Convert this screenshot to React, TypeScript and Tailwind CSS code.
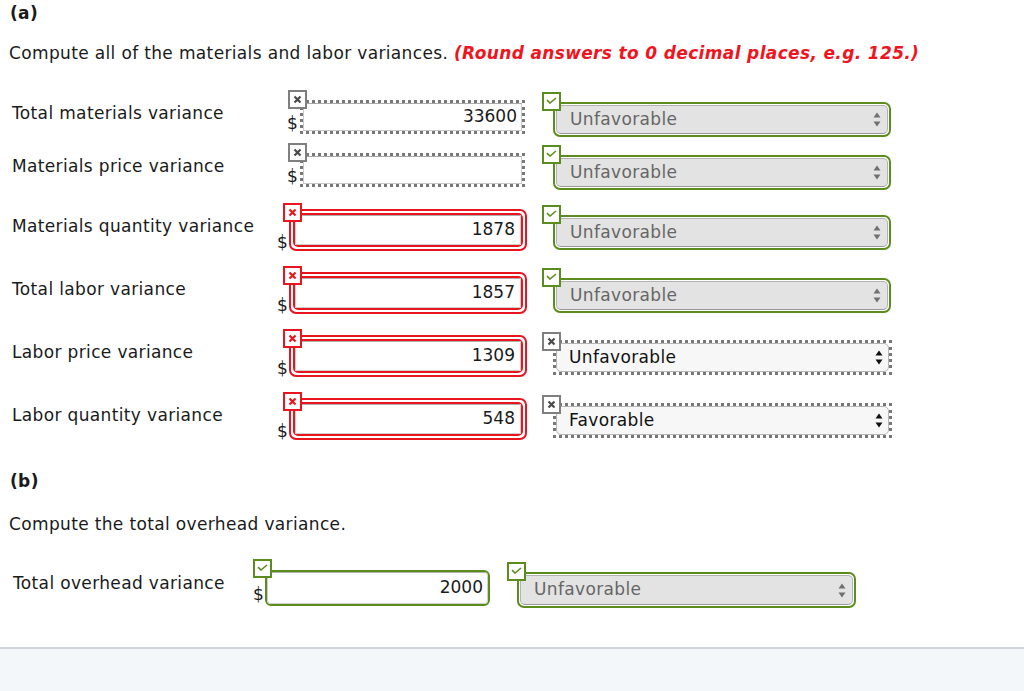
import React from 'react';

type Badge = 'gray' | 'red' | 'green';

function Mark({ kind, className }: { kind: Badge; className: string }) {
  if (kind === 'green') {
    return (
      <span className={`absolute z-10 flex h-[19px] w-[19px] justify-center border-2 border-[#5b8c1e] bg-white pt-[3px] ${className}`}>
        <svg width="11" height="7" viewBox="0 0 11 7">
          <path d="M1 3.2 L4 6 L10 1" fill="none" stroke="#5b8c1e" strokeWidth="1.6" />
        </svg>
      </span>
    );
  }
  const red = kind === 'red';
  return (
    <span
      className={`absolute z-10 flex h-[19px] w-[19px] justify-center bg-white pt-[3px] ${
        red ? 'border-2 border-[#e8141e]' : 'border-2 border-[#7f7f7f]'
      } ${className}`}
    >
      <svg width="9" height="9" viewBox="0 0 9 9">
        <path d="M1.5 1.5 L7.5 7.5 M7.5 1.5 L1.5 7.5" fill="none" stroke={red ? '#e8141e' : '#4a4a4a'} strokeWidth="2.2" />
      </svg>
    </span>
  );
}

function Arrows({ dark }: { dark: boolean }) {
  return (
    <svg width="8" height="15" viewBox="0 0 8 15">
      <path d="M0.5 5.5 L4 0.5 L7.5 5.5 Z M0.5 9.5 L4 14.5 L7.5 9.5 Z" fill={dark ? '#111' : '#707070'} />
    </svg>
  );
}

function DottedInput({ value }: { value: string }) {
  return (
    <div className="relative ml-[10px] flex h-[44px] items-end">
      <Mark kind="gray" className="left-[1px] top-0" />
      <span className="mb-[2px] w-[13px] leading-[17px]">$</span>
      <div className="h-[34px] w-[225px] border-[3px] border-dotted border-[#777] p-0">
        <div className="flex h-full items-center justify-end border border-[#c9c9c9] border-t-[#a8a8a8] bg-white pr-[4px]">
          {value}
        </div>
      </div>
    </div>
  );
}

function RedInput({ value }: { value: string }) {
  return (
    <div className="relative flex h-[48px] items-end">
      <Mark kind="red" className="left-[6px] top-0" />
      <span className="w-[12px] leading-[17px]">$</span>
      <div className="h-[42px] w-[238px] rounded-[7px] border-2 border-[#e8141e] bg-white p-[2px]">
        <div className="h-full rounded-[5px] border-2 border-[#e8141e]">
          <div className="flex h-full items-center justify-end border border-[#cfcfcf] border-t-[#b0b0b0] bg-white pr-[5px]">
            {value}
          </div>
        </div>
      </div>
    </div>
  );
}

function Select({ text, kind }: { text: string; kind: 'green' | 'dotted' }) {
  if (kind === 'dotted') {
    return (
      <div className="relative">
        <Mark kind="gray" className="left-0 top-[3px]" />
        <div className="ml-[11px] mt-[11px] h-[35px] w-[339px] border-[3px] border-dotted border-[#777]">
          <div className="flex h-full items-center justify-between rounded-[5px] border border-[#b5b5b5] bg-[#f7f7f7] pl-[12px] pr-[5px] text-[#111]">
            <span>{text}</span>
            <Arrows dark />
          </div>
        </div>
      </div>
    );
  }
  return (
    <div className="relative">
      <Mark kind="green" className="left-0 top-[2px]" />
      <div className="ml-[11px] mt-[12px] h-[35px] w-[338px] rounded-[7px] border-2 border-[#5b8c1e] bg-white p-px">
        <div className="flex h-full items-center justify-between rounded-[5px] border border-[#b3b3b3] border-b-[#999] bg-[#e3e3e3] pl-[13px] pr-[6px] text-[#666]">
          <span>{text}</span>
          <Arrows dark={false} />
        </div>
      </div>
    </div>
  );
}

const rows = [
  { label: 'Total materials variance', value: '33600', input: 'dotted', select: 'green', choice: 'Unfavorable', mt: 'mt-[25px]' },
  { label: 'Materials price variance', value: '', input: 'dotted', select: 'green', choice: 'Unfavorable', mt: 'mt-[5px]' },
  { label: 'Materials quantity variance', value: '1878', input: 'red', select: 'green', choice: 'Unfavorable', mt: 'mt-[12px]' },
  { label: 'Total labor variance', value: '1857', input: 'red', select: 'green', choice: 'Unfavorable', mt: 'mt-[15px]' },
  { label: 'Labor price variance', value: '1309', input: 'red', select: 'dotted', choice: 'Unfavorable', mt: 'mt-[15px]' },
  { label: 'Labor quantity variance', value: '548', input: 'red', select: 'dotted', choice: 'Favorable', mt: 'mt-[15px]' },
] as const;

export default function App() {
  return (
    <div className="flex h-[691px] w-[1024px] flex-col overflow-hidden bg-white font-['DejaVu_Sans',Verdana,sans-serif] text-[17px] tracking-[0.35px] text-[#1a1a1a]">
      <div className="pl-[9px]">
        <div className="ml-[1px] font-bold leading-[27px]">(a)</div>
        <div className="mt-[14px] leading-[24px]">
          Compute all of the materials and labor variances.{' '}
          <span className="font-bold italic text-[#f0141e]">(Round answers to 0 decimal places, e.g. 125.)</span>
        </div>

        {rows.map((r) => (
          <div key={r.label} className={`flex h-[48px] ${r.mt}`}>
            <div className="w-[268px] pl-[3px] pt-[11px] leading-[24px]">{r.label}</div>
            <div className="w-[265px] tracking-normal">
              {r.input === 'dotted' ? <DottedInput value={r.value} /> : <RedInput value={r.value} />}
            </div>
            <Select text={r.choice} kind={r.select} />
          </div>
        ))}

        <div className="ml-[1px] mt-[28px] font-bold leading-[27px]">(b)</div>
        <div className="mt-[17px] leading-[24px]">Compute the total overhead variance.</div>

        <div className="mt-[23px] flex h-[50px]">
          <div className="w-[244px] pl-[4px] pt-[12px] leading-[24px]">Total overhead variance</div>
          <div className="w-[254px] tracking-normal">
            <div className="relative flex h-[47px] items-end">
              <Mark kind="green" className="left-0 top-0" />
              <span className="mb-[3px] w-[12px] leading-[17px]">$</span>
              <div className="h-[36px] w-[225px] rounded-[6px] border-2 border-[#5b8c1e] bg-white">
                <div className="flex h-full items-center justify-end rounded-[4px] border border-[#cfcfcf] border-t-[#b0b0b0] pr-[4px]">
                  2000
                </div>
              </div>
            </div>
          </div>
          <div className="relative">
            <Mark kind="green" className="left-0 top-[3px]" />
            <div className="ml-[10px] mt-[13px] h-[36px] w-[339px] rounded-[7px] border-2 border-[#5b8c1e] bg-white p-px">
              <div className="flex h-full items-center justify-between rounded-[5px] border border-[#b3b3b3] border-b-[#999] bg-[#e3e3e3] pl-[13px] pr-[6px] text-[#666]">
                <span>Unfavorable</span>
                <Arrows dark={false} />
              </div>
            </div>
          </div>
        </div>
      </div>

      <div className="mt-[38px] flex-1 border-t-2 border-[#cfd4dc] bg-[#f4f7fa]" />
    </div>
  );
}
